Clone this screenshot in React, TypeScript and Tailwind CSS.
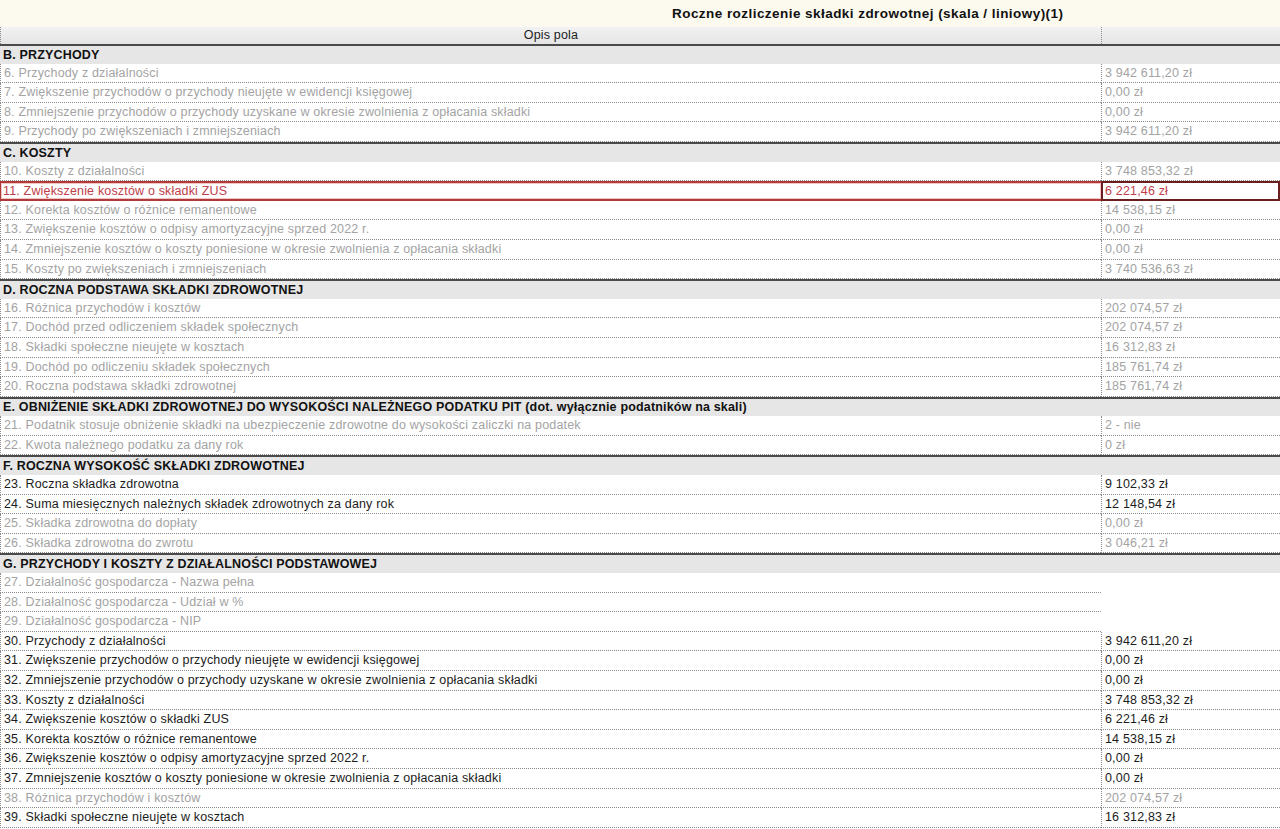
type Row =
  | { kind: "section"; label: string }
  | { kind: "field"; label: string; value?: string; active?: boolean; error?: boolean };

const rows: Row[] = [
  { kind: "section", label: "B. PRZYCHODY" },
  { kind: "field", label: "6. Przychody z działalności", value: "3 942 611,20 zł" },
  { kind: "field", label: "7. Zwiększenie przychodów o przychody nieujęte w ewidencji księgowej", value: "0,00 zł" },
  { kind: "field", label: "8. Zmniejszenie przychodów o przychody uzyskane w okresie zwolnienia z opłacania składki", value: "0,00 zł" },
  { kind: "field", label: "9. Przychody po zwiększeniach i zmniejszeniach", value: "3 942 611,20 zł" },
  { kind: "section", label: "C. KOSZTY" },
  { kind: "field", label: "10. Koszty z działalności", value: "3 748 853,32 zł" },
  { kind: "field", label: "11. Zwiększenie kosztów o składki ZUS", value: "6 221,46 zł", error: true },
  { kind: "field", label: "12. Korekta kosztów o różnice remanentowe", value: "14 538,15 zł" },
  { kind: "field", label: "13. Zwiększenie kosztów o odpisy amortyzacyjne sprzed 2022 r.", value: "0,00 zł" },
  { kind: "field", label: "14. Zmniejszenie kosztów o koszty poniesione w okresie zwolnienia z opłacania składki", value: "0,00 zł" },
  { kind: "field", label: "15. Koszty po zwiększeniach i zmniejszeniach", value: "3 740 536,63 zł" },
  { kind: "section", label: "D. ROCZNA PODSTAWA SKŁADKI ZDROWOTNEJ" },
  { kind: "field", label: "16. Różnica przychodów i kosztów", value: "202 074,57 zł" },
  { kind: "field", label: "17. Dochód przed odliczeniem składek społecznych", value: "202 074,57 zł" },
  { kind: "field", label: "18. Składki społeczne nieujęte w kosztach", value: "16 312,83 zł" },
  { kind: "field", label: "19. Dochód po odliczeniu składek społecznych", value: "185 761,74 zł" },
  { kind: "field", label: "20. Roczna podstawa składki zdrowotnej", value: "185 761,74 zł" },
  { kind: "section", label: "E. OBNIŻENIE SKŁADKI ZDROWOTNEJ DO WYSOKOŚCI NALEŻNEGO PODATKU PIT (dot. wyłącznie podatników na skali)" },
  { kind: "field", label: "21. Podatnik stosuje obniżenie składki na ubezpieczenie zdrowotne do wysokości zaliczki na podatek", value: "2 - nie" },
  { kind: "field", label: "22. Kwota należnego podatku za dany rok", value: "0 zł" },
  { kind: "section", label: "F. ROCZNA WYSOKOŚĆ SKŁADKI ZDROWOTNEJ" },
  { kind: "field", label: "23. Roczna składka zdrowotna", value: "9 102,33 zł", active: true },
  { kind: "field", label: "24. Suma miesięcznych należnych składek zdrowotnych za dany rok", value: "12 148,54 zł", active: true },
  { kind: "field", label: "25. Składka zdrowotna do dopłaty", value: "0,00 zł" },
  { kind: "field", label: "26. Składka zdrowotna do zwrotu", value: "3 046,21 zł" },
  { kind: "section", label: "G. PRZYCHODY I KOSZTY Z DZIAŁALNOŚCI PODSTAWOWEJ" },
  { kind: "field", label: "27. Działalność gospodarcza - Nazwa pełna" },
  { kind: "field", label: "28. Działalność gospodarcza - Udział w %" },
  { kind: "field", label: "29. Działalność gospodarcza - NIP" },
  { kind: "field", label: "30. Przychody z działalności", value: "3 942 611,20 zł", active: true },
  { kind: "field", label: "31. Zwiększenie przychodów o przychody nieujęte w ewidencji księgowej", value: "0,00 zł", active: true },
  { kind: "field", label: "32. Zmniejszenie przychodów o przychody uzyskane w okresie zwolnienia z opłacania składki", value: "0,00 zł", active: true },
  { kind: "field", label: "33. Koszty z działalności", value: "3 748 853,32 zł", active: true },
  { kind: "field", label: "34. Zwiększenie kosztów o składki ZUS", value: "6 221,46 zł", active: true },
  { kind: "field", label: "35. Korekta kosztów o różnice remanentowe", value: "14 538,15 zł", active: true },
  { kind: "field", label: "36. Zwiększenie kosztów o odpisy amortyzacyjne sprzed 2022 r.", value: "0,00 zł", active: true },
  { kind: "field", label: "37. Zmniejszenie kosztów o koszty poniesione w okresie zwolnienia z opłacania składki", value: "0,00 zł", active: true },
  { kind: "field", label: "38. Różnica przychodów i kosztów", value: "202 074,57 zł" },
  { kind: "field", label: "39. Składki społeczne nieujęte w kosztach", value: "16 312,83 zł", active: true },
];

function FieldRow({ row }: { row: Extract<Row, { kind: "field" }> }) {
  const text = row.error ? "text-[#c0404a]" : row.active ? "text-[#1c1c1c]" : "text-[#a3a3a3]";

  if (row.error) {
    return (
      <div className="flex h-[19.6px] bg-white">
        <div className={`flex w-[1101px] items-center border-y-2 border-l border-[#b03a3a] pl-[2px] shadow-[inset_0_0_0_1px_#f3c4c4] ${text}`}>
          {row.label}
        </div>
        <div className={`flex flex-1 items-center border-2 border-[#6b1e1e] pl-[2px] ${text}`}>{row.value}</div>
      </div>
    );
  }

  return (
    <div className="flex h-[19.6px] bg-white">
      <div className={`flex w-[1101px] items-center border-b border-l border-dotted border-[#8a8a8a] pl-[3px] ${text}`}>
        {row.label}
      </div>
      {row.value !== undefined ? (
        <div className={`flex flex-1 items-center border-b border-l border-dotted border-[#8a8a8a] pl-[3px] ${text}`}>
          {row.value}
        </div>
      ) : (
        <div className="flex-1" />
      )}
    </div>
  );
}

export default function App() {
  return (
    <div className="h-[829px] w-[1280px] overflow-hidden bg-white font-['Liberation_Sans',Arial,sans-serif] text-[12.5px] leading-none tracking-[0.17px]">
      <div className="flex h-[27px] items-center bg-[#fcfaef] pl-[672px] text-[13.5px] font-bold tracking-[0.45px] text-[#111]">
        Roczne rozliczenie składki zdrowotnej (skala / liniowy)(1)
      </div>
      <div className="flex h-[17px] bg-gradient-to-b from-[#f2f2f2] to-[#e4e4e4] text-[#222]">
        <div className="flex w-[1101px] items-center justify-center border-l border-dotted border-[#8a8a8a]">Opis pola</div>
        <div className="flex-1 border-l border-dotted border-[#8a8a8a]" />
      </div>
      {rows.map((row, i) =>
        row.kind === "section" ? (
          <div
            key={i}
            className="flex h-[19.6px] items-center border-t-2 border-[#4a4a4a] bg-[#e6e6e6] pl-[3px] font-bold text-[#111]"
          >
            {row.label}
          </div>
        ) : (
          <FieldRow key={i} row={row} />
        )
      )}
    </div>
  );
}
